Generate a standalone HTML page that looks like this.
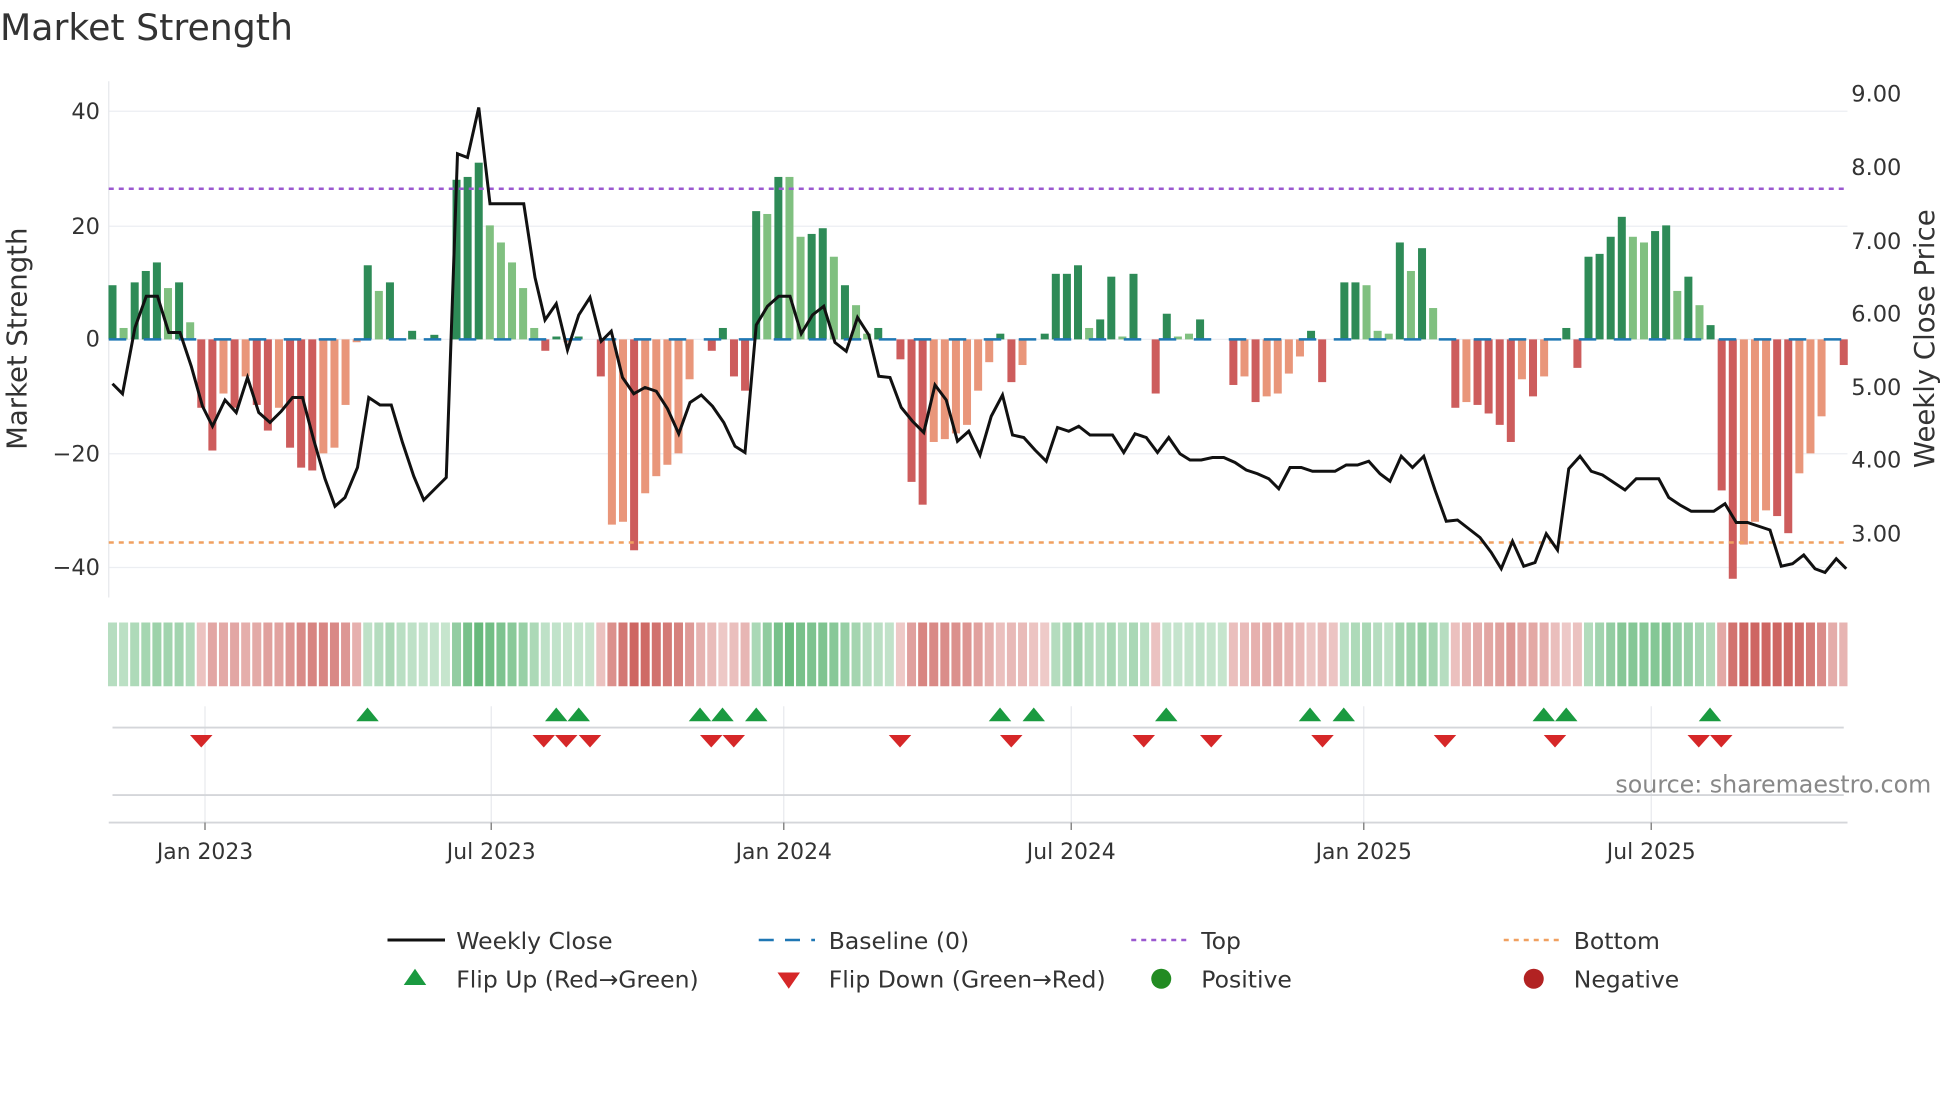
<!DOCTYPE html>
<html><head><meta charset="utf-8"><style>
html,body{margin:0;padding:0;background:#fff;}
svg{display:block;font-family:"DejaVu Sans","Liberation Sans",sans-serif;}
</style></head><body>
<svg id="s" width="1960" height="1102" viewBox="0 0 1568 881.6" xmlns="http://www.w3.org/2000/svg">
<rect width="1568" height="882" fill="#fff"/>
<text x="0" y="32" font-size="29" fill="#333">Market Strength</text>
<g stroke="#eceef2" stroke-width="1">
<line x1="87" y1="89" x2="1478" y2="89"/><line x1="87" y1="181" x2="1478" y2="181"/>
<line x1="87" y1="271.5" x2="1478" y2="271.5"/><line x1="87" y1="363" x2="1478" y2="363"/>
<line x1="87" y1="454" x2="1478" y2="454"/>
</g>
<line x1="87" y1="65" x2="87" y2="478" stroke="#e6e8ec"/>
<g font-size="18" fill="#333" text-anchor="end">
<text x="80" y="95">40</text><text x="80" y="187">20</text><text x="80" y="277">0</text>
<text x="80" y="369">−20</text><text x="80" y="460">−40</text>
</g>
<g font-size="18" fill="#333">
<text x="1481" y="81">9.00</text><text x="1481" y="140">8.00</text><text x="1481" y="199">7.00</text>
<text x="1481" y="257">6.00</text><text x="1481" y="316">5.00</text><text x="1481" y="374">4.00</text>
<text x="1481" y="433">3.00</text>
</g>
<text transform="translate(21,271) rotate(-90)" font-size="22" fill="#333" text-anchor="middle">Market Strength</text>
<text transform="translate(1547,271) rotate(-90)" font-size="22" fill="#333" text-anchor="middle">Weekly Close Price</text>
<g id="bars"></g>
<line x1="87" y1="271.5" x2="1478" y2="271.5" stroke="#1f77b4" stroke-width="2" stroke-dasharray="14 14"/>
<line x1="87" y1="151" x2="1478" y2="151" stroke="#9b59d0" stroke-width="2" stroke-dasharray="4 4"/>
<line x1="87" y1="434" x2="1478" y2="434" stroke="#f0a060" stroke-width="2" stroke-dasharray="4 4"/>
<polyline fill="none" stroke="#111" stroke-width="2.4" stroke-linejoin="miter" points="90,307 98,315 108,262 117,237 126,237 135,266 144,266 153,293 162,325 170,341 180,320 189,330 198,302 207,330 216,338 225,329 234,318 242,318 251,352 260,383 268,405 276,398 286,374 295,318 304,324 313,324 322,354 331,381 339,400 348,391 357,382 366,123 374,126 383,86 392,163 401,163 410,163 419,163 428,222 436,256 445,243 454,280 463,252 472,238 481,273 489,265 498,302 507,315 516,310 525,313 534,327 543,347 552,322 561,316 570,325 579,338 588,357 596,362 605,260 614,245 623,237 632,237 641,267 650,252 659,245 668,274 677,281 686,254 695,268 703,301 712,302 721,326 730,337 739,346 748,308 757,320 766,353 775,345 784,364 793,333 802,316 810,348 819,350 828,360 837,369 846,342 855,345 863,341 872,348 881,348 890,348 899,362 908,347 917,350 926,362 935,350 944,363 952,368 961,368 970,366 979,366 988,370 997,376 1006,379 1015,383 1023,391 1032,374 1041,374 1050,377 1059,377 1068,377 1077,372 1086,372 1095,369 1104,379 1112,385 1121,365 1130,374 1139,365 1148,392 1157,417 1166,416 1175,423 1184,430 1193,442 1201,455 1210,433 1219,453 1228,450 1237,427 1246,440 1255,375 1264,365 1273,377 1282,380 1291,386 1300,392 1309,383 1318,383 1327,383 1335,398 1344,404 1353,409 1362,409 1371,409 1380,403 1389,418 1398,418 1407,421 1416,424 1425,453 1434,451 1443,444 1452,455 1460,458 1469,447 1477,455"/>
<g id="heat"></g>
<g stroke="#e8eaee" stroke-width="1">
<line x1="164" y1="565" x2="164" y2="658"/><line x1="393" y1="565" x2="393" y2="658"/>
<line x1="627" y1="565" x2="627" y2="658"/><line x1="857" y1="565" x2="857" y2="658"/>
<line x1="1091" y1="565" x2="1091" y2="658"/><line x1="1321" y1="565" x2="1321" y2="658"/>
</g>
<line x1="90" y1="582" x2="1475" y2="582" stroke="#d4d6da" stroke-width="1.5"/>
<line x1="90" y1="636" x2="1475" y2="636" stroke="#d4d6da" stroke-width="1.5"/>
<line x1="87" y1="658" x2="1478" y2="658" stroke="#d4d6da" stroke-width="1.5"/>
<g stroke="#888" stroke-width="1.2">
<line x1="164" y1="658" x2="164" y2="664"/><line x1="393" y1="658" x2="393" y2="664"/>
<line x1="627" y1="658" x2="627" y2="664"/><line x1="857" y1="658" x2="857" y2="664"/>
<line x1="1091" y1="658" x2="1091" y2="664"/><line x1="1321" y1="658" x2="1321" y2="664"/>
</g>
<g id="flips"></g>
<text x="1545" y="634" font-size="19" fill="#888" text-anchor="end">source: sharemaestro.com</text>
<g font-size="17.5" fill="#333" text-anchor="middle">
<text x="164" y="687">Jan 2023</text><text x="393" y="687">Jul 2023</text><text x="627" y="687">Jan 2024</text>
<text x="857" y="687">Jul 2024</text><text x="1091" y="687">Jan 2025</text><text x="1321" y="687">Jul 2025</text>
</g>
<g font-size="18.8" fill="#333">
<line x1="310" y1="752" x2="356" y2="752" stroke="#111" stroke-width="2.4"/>
<text x="365" y="759">Weekly Close</text>
<line x1="607" y1="752" x2="652" y2="752" stroke="#1f77b4" stroke-width="2" stroke-dasharray="12 9"/>
<text x="663" y="759">Baseline (0)</text>
<line x1="905" y1="752" x2="950" y2="752" stroke="#9b59d0" stroke-width="2" stroke-dasharray="4 4"/>
<text x="961" y="759">Top</text>
<line x1="1203" y1="752" x2="1248" y2="752" stroke="#f0a060" stroke-width="2" stroke-dasharray="4 4"/>
<text x="1259" y="759">Bottom</text>
<polygon points="323,788 341,788 332,775" fill="#1a9a40"/>
<text x="365" y="790">Flip Up (Red→Green)</text>
<polygon points="622,778 640,778 631,791" fill="#d62728"/>
<text x="663" y="790">Flip Down (Green→Red)</text>
<circle cx="929" cy="783" r="8" fill="#228b22"/>
<text x="961" y="790">Positive</text>
<circle cx="1227" cy="783" r="8" fill="#b22222"/>
<text x="1259" y="790">Negative</text>
</g>
</svg>
<script>
var V=[[9.5,1],[2,0],[10,1],[12,1],[13.5,1],[9,0],[10,1],[3,0],
[-12,1],[-19.5,1],[-9.5,0],[-12,1],[-6.5,0],[-11.5,1],[-16,1],[-12,0],[-19,1],[-22.5,1],[-23,1],[-20,0],[-19,0],[-11.5,0],[-0.5,0],
[13,1],[8.5,0],[10,1],[0,0],[1.5,1],[0,0],[0.8,1],[0,0],
[28,1],[28.5,1],[31,1],[20,0],[17,0],[13.5,0],[9,0],[2,0],
[-2,1],[0.5,1],[-0.5,0],[0.5,1],[0,0],[-6.5,1],[-32.5,0],[-32,0],[-37,1],[-27,0],[-24,0],[-22,0],[-20,0],[-7,0],[0,0],[-2,1],[2,1],[-6.5,1],[-9,1],
[22.5,1],[22,0],[28.5,1],[28.5,0],[18,0],[18.5,1],[19.5,1],[14.5,0],[9.5,1],[6,0],[1,0],[2,1],[0,0],
[-3.5,1],[-25,1],[-29,1],[-18,0],[-17.5,0],[-16.5,0],[-15,0],[-9,0],[-4,0],[1,1],[-7.5,1],[-4.5,0],[0,0],[1,1],
[11.5,1],[11.5,1],[13,1],[2,0],[3.5,1],[11,1],[0.5,0],[11.5,1],[0,0],[-9.5,1],[4.5,1],[0.5,0],[1,0],[3.5,1],[0,0],[0,0],
[-8,1],[-6.5,0],[-11,1],[-10,0],[-9.5,0],[-6,0],[-3,0],[1.5,1],[-7.5,1],[0,0],
[10,1],[10,1],[9.5,0],[1.5,0],[1,0],[17,1],[12,0],[16,1],[5.5,0],[0,0],
[-12,1],[-11,0],[-11.5,1],[-13,1],[-15,1],[-18,1],[-7,0],[-10,1],[-6.5,0],[0,0],[2,1],[-5,1],
[14.5,1],[15,1],[18,1],[21.5,1],[18,0],[17,0],[19,1],[20,1],[8.5,0],[11,1],[6,0],[2.5,1],
[-26.5,1],[-42,1],[-36,0],[-32,0],[-30,0],[-31,1],[-34,1],[-23.5,0],[-20,0],[-13.5,0],[0,0],[-4.5,1]];
var NS="http://www.w3.org/2000/svg",n=V.length,sp=(1475-90)/(n-1);
function el(p,t,a){var e=document.createElementNS(NS,t);for(var k in a)e.setAttribute(k,a[k]);p.appendChild(e);return e;}
var B=document.getElementById("bars"),H=document.getElementById("heat");
var sm=0;
for(var i=0;i<n;i++){var v=V[i][0],d=V[i][1],x=90+i*sp;
 if(Math.abs(v)>0.2){var y0=271.5,y1=271.5-v*4.56;
  var c=v>0?(d?"#2e8b57":"#80c080"):(d?"#cd5c5c":"#e9967a");
  el(B,"rect",{x:x-3.2,y:Math.min(y0,y1),width:6.4,height:Math.abs(y1-y0),fill:c});}
 sm=sm*0.5+v*0.5; var s=(Math.abs(sm)<0.5?(i>0?V[i-1][0]:v):sm);
 var t=Math.min(Math.abs(s)/30,1),a=0.3+0.6*t;
 var col=s>=0?"rgba(70,170,95,"+a+")":"rgba(200,85,80,"+a+")";
 if(x<1478) el(H,"rect",{x:x-3.6,y:498,width:Math.min(7.2,1478-(x-3.6)),height:51,fill:col});}
var F=document.getElementById("flips");
[294,445,463,560,578,605,800,827,933,1048,1075,1235,1253,1368].forEach(function(x){el(F,"polygon",{points:(x-9)+",577 "+(x+9)+",577 "+x+",566",fill:"#1a9a40"});});
[161,435,453,472,569,587,720,809,915,969,1058,1156,1244,1359,1377].forEach(function(x){el(F,"polygon",{points:(x-9)+",588 "+(x+9)+",588 "+x+",598",fill:"#d62728"});});
</script>
</body></html>
